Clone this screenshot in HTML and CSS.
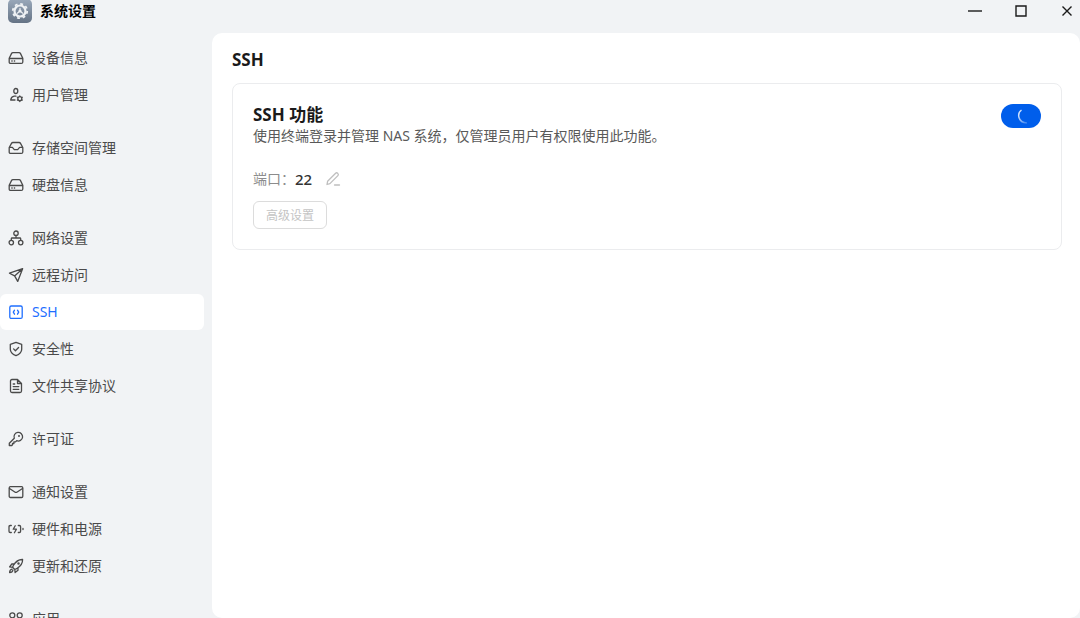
FILE: index.html
```
<!DOCTYPE html>
<html lang="zh-CN">

<head>
    <meta charset="UTF-8">
    <meta name="viewport" content="width=device-width, initial-scale=1.0">
    <title>系统设置</title>
    <link rel="stylesheet" href="styles.css">
</head>

<body>
    <header class="titlebar">
        <svg class="app-icon" viewBox="0 0 24 24">
            <defs>
                <linearGradient id="app-bg" x1="0" y1="0" x2="0" y2="1">
                    <stop offset="0" stop-color="#9aa9bb" />
                    <stop offset="1" stop-color="#657385" />
                </linearGradient>
            </defs>
            <rect width="24" height="24" rx="5" fill="url(#app-bg)" />
            <circle cx="12" cy="12" r="5.500" fill="none" stroke="#eef1f4" stroke-width="2.200" />
            <circle cx="12" cy="12" r="7.200" fill="none" stroke="#eef1f4" stroke-width="1.800" stroke-dasharray="2.830 2.830" />
            <path d="M12 9v2.500M12 12l-3 2.500M12 12l3 2.500" fill="none" stroke="#eef1f4" stroke-width="1.200" />
            <circle cx="12" cy="12" r="1.600" fill="#eef1f4" />
        </svg>
        <h1 class="app-name">系统设置</h1>
        <div class="window-btns">
            <button class="window-btn" aria-label="最小化">
                <svg viewBox="0 0 16 16"><path d="M1 8h14" /></svg>
            </button>
            <button class="window-btn" aria-label="最大化">
                <svg viewBox="0 0 16 16"><path d="M3 3h10v10H3z" /></svg>
            </button>
            <button class="window-btn" aria-label="关闭">
                <svg viewBox="0 0 16 16"><path d="M3.500 3.500l9 9M12.500 3.500l-9 9" /></svg>
            </button>
        </div>
    </header>

    <div class="layout">
        <nav class="sidebar">
            <div class="menu-group">
                <a class="menu-item" href="#device">
                    <svg class="icon" viewBox="0 0 16 16"><path d="M1.200 8.300L3.600 3.400Q4 2.600 4.900 2.600h6.200q.9 0 1.300.8l2.400 4.900v3.600q0 1.500-1.500 1.500H2.700q-1.500 0-1.500-1.500zM1.400 8.500h13.200M3.800 11h.4M6.300 11h.4" /></svg>
                    设备信息
                </a>
                <a class="menu-item" href="#users">
                    <svg class="icon" viewBox="0 0 16 16"><ellipse cx="7.800" cy="4" rx="2" ry="2.500" /><path d="M8 9.200H6.200Q3.300 9.500 2.700 13H7" /><circle cx="11.800" cy="11.700" r="2" /><path d="M11.800 8.900v.6M11.800 13.900v.6M9.400 10.300l.6.300M13.600 12.800l.6.300M9.400 13.100l.6-.3M13.600 10.600l.6-.3" /></svg>
                    用户管理
                </a>
            </div>
            <div class="menu-group">
                <a class="menu-item" href="#storage">
                    <svg class="icon" viewBox="0 0 16 16"><path d="M1.200 7.500L3.500 3.400Q4 2.500 4.900 2.500h6.200q.9 0 1.400.9l2.300 4.100v4.400q0 1.500-1.500 1.500H2.700q-1.500 0-1.500-1.500zM1.400 7.400h3L6.300 9.600h3.400l1.900-2.200h3" /></svg>
                    存储空间管理
                </a>
                <a class="menu-item" href="#disk">
                    <svg class="icon" viewBox="0 0 16 16"><path d="M1.200 8.300L3.600 3.400Q4 2.600 4.900 2.600h6.200q.9 0 1.300.8l2.400 4.900v3.600q0 1.500-1.500 1.500H2.700q-1.500 0-1.500-1.500zM1.400 8.500h13.200M3.800 11h.4M6.300 11h.4" /></svg>
                    硬盘信息
                </a>
            </div>
            <div class="menu-group">
                <a class="menu-item" href="#network">
                    <svg class="icon" viewBox="0 0 16 16"><circle cx="8" cy="3.200" r="2.200" /><circle cx="3.300" cy="12.600" r="2.200" /><circle cx="12.700" cy="12.600" r="2.200" /><path d="M8 5.400v2.600M3.300 10.400V8.800q0-.8.8-.8h7.800q.8 0 .8.800v1.600" /></svg>
                    网络设置
                </a>
                <a class="menu-item" href="#remote">
                    <svg class="icon" viewBox="0 0 16 16"><path d="M14.600 1.700L1.500 6.200l5.100 2.700 3.100 5.500zM14.600 1.700L6.600 8.900" /></svg>
                    远程访问
                </a>
                <a class="menu-item active" href="#ssh">
                    <svg class="icon" viewBox="0 0 16 16"><rect x="1.800" y="2" width="12.400" height="12.400" rx="1.500" /><path d="M6.500 6.200L5.300 8.200l1.200 2M9.500 6.200l1.200 2-1.200 2" /></svg>
                    SSH
                </a>
                <a class="menu-item" href="#security">
                    <svg class="icon" viewBox="0 0 16 16"><path d="M8 1.400l5.700 2v4.800c0 3-2.200 5-5.700 6.400-3.500-1.400-5.700-3.400-5.700-6.400V3.400zM5.600 7.900l1.800 1.800 3.200-3.200" /></svg>
                    安全性
                </a>
                <a class="menu-item" href="#share">
                    <svg class="icon" viewBox="0 0 16 16"><path d="M9.500 1.500H4Q2.500 1.500 2.500 3v10q0 1.500 1.500 1.500h8q1.500 0 1.500-1.500V5.500zM9.500 1.500v4h4M5.200 6h1.500M5.200 8.600h5.600M5.200 11.300h5.600" /></svg>
                    文件共享协议
                </a>
            </div>
            <div class="menu-group">
                <a class="menu-item" href="#license">
                    <svg class="icon" viewBox="0 0 16 16"><path d="M6.300 7.300A4.300 4.300 0 1 1 8.700 9.700L7.500 10.900H5.900v1.600H4.500v1.300l-.7.700H1.300v-2.300z" /><circle cx="11" cy="5" r=".4" /></svg>
                    许可证
                </a>
            </div>
            <div class="menu-group">
                <a class="menu-item" href="#notice">
                    <svg class="icon" viewBox="0 0 16 16"><rect x="1.200" y="2.700" width="13.600" height="10.800" rx="1.200" /><path d="M1.500 4.500L6.800 8q1.200.8 2.400 0l5.300-3.500" /></svg>
                    通知设置
                </a>
                <a class="menu-item" href="#power">
                    <svg class="icon" viewBox="0 0 16 16"><path d="M3.300 4.500H2.300Q1 4.500 1 5.800v4.400q0 1.300 1.300 1.300h1M10.300 4.500h1q1.300 0 1.300 1.300v4.400q0 1.300-1.300 1.300h-1M7.200 4.700L5.200 8.200h3.200L6.400 11.700M15 7.500v1" /></svg>
                    硬件和电源
                </a>
                <a class="menu-item" href="#update">
                    <svg class="icon" viewBox="0 0 16 16"><path d="M14.600 1.500C10.500 1.300 8 3 5.300 7.500L4.600 9.300l2.200 2.200 1.800-.8C13 8 14.800 5.500 14.600 1.500zM6.200 6H3.800L1.600 8.900l3 .4M10 9.800v2.400l-2.900 2.300-.3-3M4 11.200c-1.700.3-2.300 1.300-2.400 3.300 2 0 3-.8 3.300-2.400" /><circle cx="10.500" cy="5.500" r=".6" /></svg>
                    更新和还原
                </a>
            </div>
            <div class="menu-group">
                <a class="menu-item" href="#apps">
                    <svg class="icon" viewBox="0 0 16 16"><circle cx="4.300" cy="4.300" r="2.500" /><circle cx="11.700" cy="4.300" r="2.500" /><circle cx="4.300" cy="11.700" r="2.500" /><circle cx="11.700" cy="11.700" r="2.500" /></svg>
                    应用
                </a>
            </div>
        </nav>

        <main class="content">
            <h2 class="page-title">SSH</h2>
            <section class="card">
                <div class="card-head">
                    <div>
                        <h3 class="card-title" id="ssh-title">SSH 功能</h3>
                        <p class="card-desc">使用终端登录并管理 NAS 系统，仅管理员用户有权限使用此功能。</p>
                    </div>
                    <div class="switch">
                        <input class="switch-input" type="checkbox" aria-labelledby="ssh-title" checked>
                        <!-- 加载中 -->
                        <svg class="switch-loading" viewBox="0 0 16 16">
                            <defs>
                                <linearGradient id="spin" x1="0" y1="0" x2="1" y2="1">
                                    <stop offset="0.200" stop-color="#fff" stop-opacity="0.800" />
                                    <stop offset="1" stop-color="#fff" stop-opacity="0.200" />
                                </linearGradient>
                            </defs>
                            <path d="M4.500 2C0 5 .5 14.500 10 15" fill="none" stroke="url(#spin)" stroke-width="1.500" />
                        </svg>
                    </div>
                </div>
                <div class="port">
                    <span class="port-label">端口：</span>
                    <span class="port-value">22</span>
                    <button class="edit-btn" aria-label="编辑端口">
                        <svg class="icon" viewBox="0 0 16 16"><path d="M2 13.500l.6-3.200 8-8q1-1 2 0l.3.300q1 1 0 2l-8 8zM9.500 14h5" /></svg>
                    </button>
                </div>
                <button class="advanced-btn" disabled>高级设置</button>
            </section>
        </main>
    </div>
</body>

</html>
```
FILE: styles.css
```
* {
    box-sizing: border-box;
}

body {
    margin: 0;
    height: 100vh;
    display: flex;
    flex-direction: column;
    overflow: hidden;
    background-color: #f1f3f5;
    color: #1a1a1a;
    font-family: "Noto Sans", "Noto Sans CJK SC", sans-serif;
    font-size: 14px;
    line-height: 20px;
}

h1,
h2,
h3,
p {
    margin: 0;
}

button {
    padding: 0;
    border: none;
    background-color: transparent;
    font-family: inherit;
    cursor: pointer;
}

svg {
    display: block;
}

/* 标题栏 */
.titlebar {
    flex: none;
    display: flex;
    align-items: flex-start;
    gap: 8px;
    height: 33px;
    padding-left: 8px;
}

.app-icon {
    width: 24px;
    height: 24px;
    margin-top: -1px;
}

.app-name {
    font-size: 14px;
    font-weight: bold;
    line-height: 22px;
    color: #000;
}

.window-btns {
    display: flex;
    gap: 30px;
    margin-left: auto;
    padding: 3px 5px 0 0;
}

.window-btn svg {
    width: 16px;
    height: 16px;
    fill: none;
    stroke: #1a1a1a;
    stroke-width: 1.4;
}

.layout {
    flex: 1;
    display: flex;
    min-height: 0;
}

/* 左侧菜单 */
.sidebar {
    flex: none;
    width: 212px;
    padding: 7px 8px 0 0;
    overflow-y: auto;
    scrollbar-width: none;
}

.menu-group {
    display: flex;
    flex-direction: column;
    gap: 1px;
    margin-bottom: 17px;
}

.menu-item {
    display: flex;
    align-items: center;
    gap: 8px;
    height: 36px;
    padding-left: 8px;
    border-radius: 6px;
    color: #4a4a4a;
    text-decoration: none;
}

.menu-item:hover {
    background-color: #e8eaed;
}

.menu-item.active {
    background-color: #fff;
    color: #1f6fff;
}

.icon {
    width: 16px;
    height: 16px;
    fill: none;
    stroke: currentColor;
    stroke-width: 1.3;
    stroke-linecap: round;
    stroke-linejoin: round;
}

/* 右侧内容 */
.content {
    flex: 1;
    min-width: 0;
    padding: 16px 18px 20px 20px;
    border-radius: 10px;
    background-color: #fff;
}

.page-title,
.card-title {
    font-size: 17px;
    font-weight: bold;
    line-height: 22px;
}

.card {
    margin-top: 12px;
    padding: 20px;
    border: 1px solid #ebecee;
    border-radius: 8px;
}

.card-head {
    display: flex;
    justify-content: space-between;
    align-items: flex-start;
    gap: 20px;
}

.card-desc {
    color: #595959;
}

.switch {
    position: relative;
    flex: none;
    width: 40px;
    height: 24px;
}

.switch-input {
    appearance: none;
    display: block;
    width: 40px;
    height: 24px;
    margin: 0;
    border-radius: 12px;
    background-color: #b8bcc2;
}

.switch-input:checked {
    background-color: #005eeb;
}

.switch-loading {
    position: absolute;
    top: 4px;
    right: 8px;
    width: 16px;
    height: 16px;
    pointer-events: none;
}

.port {
    display: flex;
    align-items: center;
    margin-top: 23px;
}

.port-label {
    color: #8c8c8c;
}

.port-value {
    font-size: 15px;
    font-weight: 500;
    color: #333;
}

.edit-btn {
    margin-left: 13px;
    color: #bfbfbf;
}

.advanced-btn {
    height: 28px;
    margin-top: 12px;
    padding: 0 12px;
    border: 1px solid #dcdcdc;
    border-radius: 6px;
    font-size: 12px;
    color: #c4c4c4;
}

.advanced-btn:disabled {
    cursor: not-allowed;
}
```
